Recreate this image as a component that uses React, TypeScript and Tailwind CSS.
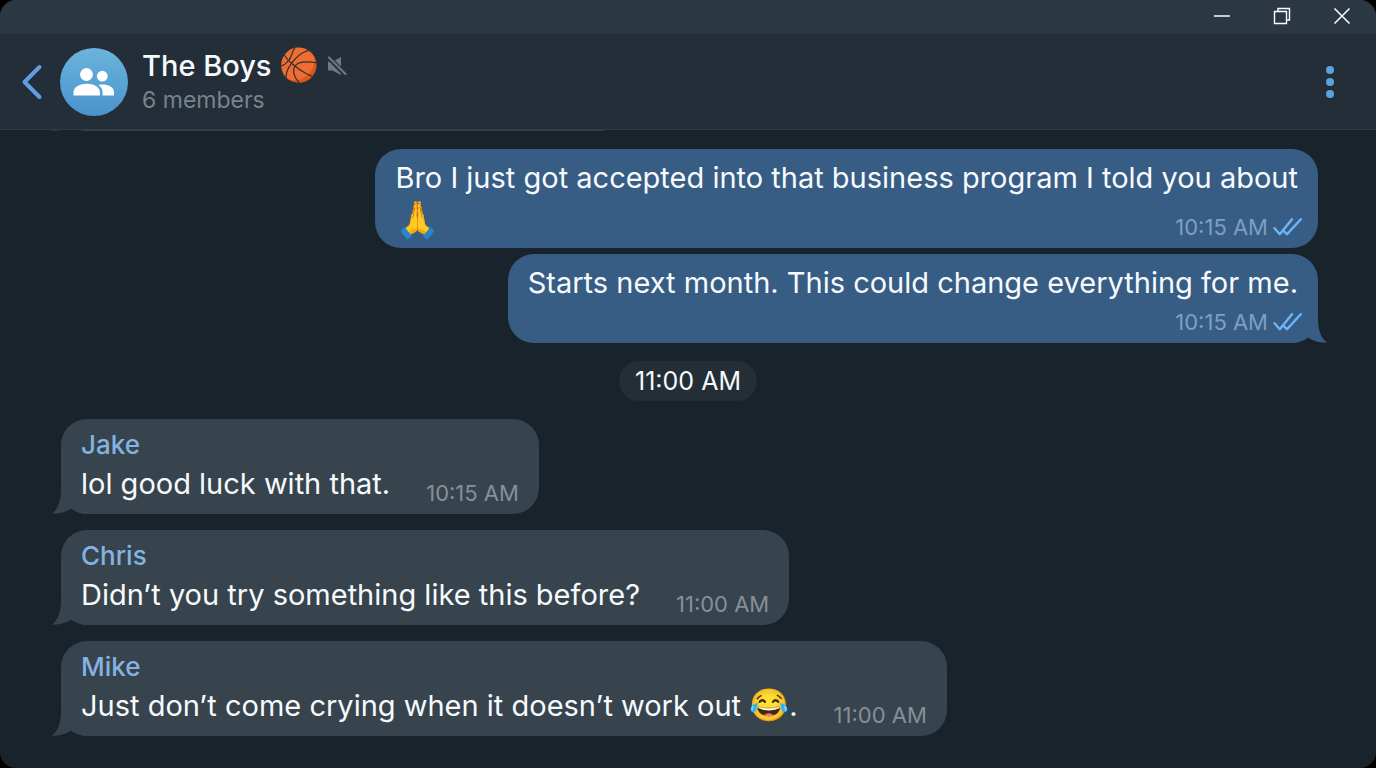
import type { ReactNode } from "react";

type Incoming = { name: string; text: ReactNode; time: string };

function Emoji({ children }: { children: string }) {
  return <span className="text-[32px] leading-none">{children}</span>;
}

const replies: Incoming[] = [
  { name: "Jake", text: "lol good luck with that.", time: "10:15 AM" },
  { name: "Chris", text: "Didn’t you try something like this before?", time: "11:00 AM" },
  { name: "Mike", text: <>Just don’t come crying when it doesn’t work out <Emoji>😂</Emoji>.</>, time: "11:00 AM" },
];

function DoubleCheck() {
  return (
    <svg width="30" height="20" viewBox="0 0 30 20" fill="none" stroke="#6cb5f6" strokeWidth="2.4" strokeLinecap="round" strokeLinejoin="round" aria-hidden="true">
      <path d="M2.500 11.2 7.800 17.200 20 2.200" />
      <path d="m12.300 14.600 2.700 2.600L28.800 2.200" />
    </svg>
  );
}

function Tail({ custom_class }: { custom_class: string }) {
  return (
    <svg className={`absolute bottom-0 -z-10 ${custom_class}`} width="36" height="30" viewBox="0 0 36 30" aria-hidden="true">
      <path fill="currentColor" d="M9 0C9.500 14 7.500 24 0 29.600C8 30 14 28 19 24.500C24 28 30 30 36 30V0Z" />
    </svg>
  );
}

function SentBubble({ text, trail, time, tail }: { text: string; trail?: string; time: string; tail?: boolean }) {
  return (
    <div className="relative isolate max-w-full rounded-[26px] bg-[#385d85] pt-2.5 pr-4 pb-[7px] pl-5">
      <p className="pr-1 text-[29px] leading-[38px]">{text}</p>
      <div className={trail ? "flex h-11 items-end justify-between" : "flex h-[34px] items-end justify-between"}>
        <span className="text-[36px] leading-11">{trail}</span>
        <span className="flex items-center gap-1 text-[22px] leading-7 text-[#7e9fc4]">
          {time}
          <DoubleCheck />
        </span>
      </div>
      {tail && <Tail custom_class="-right-[9px] -scale-x-100 text-[#385d85]" />}
    </div>
  );
}

function ReplyBubble({ name, text, time }: Incoming) {
  return (
    <div className="relative isolate max-w-full rounded-[26px] bg-[#37444d] px-5 pt-2.5 pb-[7px]">
      <p className="text-[26px] leading-8 font-medium text-[#84b3e2]">{name}</p>
      <div className="flex items-end gap-9 pt-1">
        <p className="pb-1 text-[29px] leading-[38px]">{text}</p>
        <span className="shrink-0 text-[22px] leading-7 text-[#84919a]">{time}</span>
      </div>
      <Tail custom_class="-left-[9px] text-[#37444d]" />
    </div>
  );
}

function TitleBar() {
  return (
    <div className="flex h-[34px] shrink-0 items-center justify-end gap-5 bg-[#2b3742] pr-3.5 pb-0.5 text-white">
      <button type="button" aria-label="Minimize" className="flex h-8 w-10 items-center justify-center">
        <svg width="18" height="18" viewBox="0 0 18 18" fill="none" stroke="currentColor" strokeWidth="1.5">
          <path d="M1 9h16" />
        </svg>
      </button>
      <button type="button" aria-label="Restore" className="flex h-8 w-10 items-center justify-center">
        <svg width="18" height="18" viewBox="0 0 18 18" fill="none" stroke="currentColor" strokeWidth="1.4">
          <path d="M1.500 4.500h12v12h-12zM5 4.500V1.500h11.500V13h-3" />
        </svg>
      </button>
      <button type="button" aria-label="Close" className="flex h-8 w-10 items-center justify-center">
        <svg width="18" height="18" viewBox="0 0 18 18" fill="none" stroke="currentColor" strokeWidth="1.5">
          <path d="m1.500 1.500 15 15M16.500 1.500l-15 15" />
        </svg>
      </button>
    </div>
  );
}

function ChatHeader() {
  return (
    <header className="flex h-24 shrink-0 items-center border-b border-[#303d47] bg-[#242e38] pr-6 pl-5">
      <button type="button" aria-label="Back" className="flex h-12 w-6 items-center justify-center">
        <svg width="24" height="38" viewBox="0 0 24 38" fill="none" stroke="#5f9ee0" strokeWidth="4" strokeLinecap="round" strokeLinejoin="round">
          <path d="M19.500 4 4.500 19l15 15" />
        </svg>
      </button>
      <div className="ml-4 flex size-[68px] items-center justify-center rounded-full bg-linear-to-b from-[#6ab4dc] to-[#4a93cd]">
        <svg width="42" height="30" viewBox="0 0 42 30" fill="#fff" aria-hidden="true">
          <circle cx="13.500" cy="7.500" r="6.400" />
          <circle cx="29.300" cy="9.200" r="5.400" />
          <path d="M.5 28.500v-3C.5 20 7 16.800 13.800 16.800S27 20 27 25.500v3z" />
          <path d="M25.500 18c1.200-.3 2.500-.4 3.800-.4 6 0 11.700 2.500 11.700 7.800v3H29.500v-3.200c0-3-1.400-5.400-4-7.200z" />
        </svg>
      </div>
      <div className="ml-3.5 flex flex-col">
        <div className="flex items-center gap-2">
          <h1 className="text-[29px] leading-9 font-medium">
            The Boys <Emoji>🏀</Emoji>
          </h1>
          <svg width="20" height="20" viewBox="0 0 20 20" aria-label="Muted" role="img">
            <path fill="#6d7983" d="M1 5.500h4.500L14 1v18l-8.500-4.500H1z" />
            <path stroke="#242e38" strokeWidth="5" d="m0 0 20 20" />
            <path stroke="#6d7983" strokeWidth="2.200" strokeLinecap="round" d="m2 1.500 16.500 16.500" />
          </svg>
        </div>
        <p className="text-[23px] leading-8 text-[#77838d]">6 members</p>
      </div>
      <button type="button" aria-label="Chat menu" className="ml-auto flex h-12 w-11 items-center justify-center">
        <svg width="10" height="34" viewBox="0 0 10 34" fill="#5e9fdd">
          <circle cx="5" cy="5" r="4" />
          <circle cx="5" cy="17" r="4" />
          <circle cx="5" cy="29" r="4" />
        </svg>
      </button>
    </header>
  );
}

export default function App() {
  return (
    <div className="min-h-screen bg-black font-['Inter',sans-serif] text-[#f7fafc]">
      <div className="flex h-screen flex-col overflow-hidden rounded-2xl bg-[#19232b]">
        <TitleBar />
        <ChatHeader />
        <main className="flex min-h-0 flex-1 flex-col justify-end overflow-hidden px-[58px] pb-8">
          {/* older message, scrolled out under the header */}
          <div className="relative isolate ml-[3px] h-24 w-[564px] max-w-full shrink-0 rounded-[26px] bg-[#37444d]">
            <Tail custom_class="-left-[9px] text-[#37444d]" />
          </div>
          <div className="mt-[18px] flex flex-col items-end gap-1.5">
            <SentBubble text="Bro I just got accepted into that business program I told you about" trail="🙏" time="10:15 AM" />
            <SentBubble text="Starts next month. This could change everything for me." time="10:15 AM" tail />
          </div>
          <div className="my-[18px] self-center rounded-full bg-[#232e37] px-4 py-1 text-[25px] leading-8">
            11:00 AM
          </div>
          <div className="flex flex-col items-start gap-4 pl-[3px]">
            {replies.map((reply) => (
              <ReplyBubble key={reply.name} {...reply} />
            ))}
          </div>
        </main>
      </div>
    </div>
  );
}
